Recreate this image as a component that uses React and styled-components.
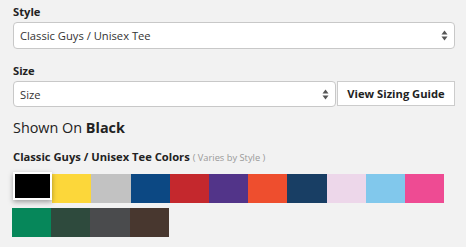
import React from "react";
import styled, { createGlobalStyle } from "styled-components";

const GlobalStyle = createGlobalStyle`
  html, body {
    margin: 0;
    padding: 0;
    background: #f2f2f2;
  }
  body {
    font-family: "Open Sans", "Liberation Sans", sans-serif;
    color: #222;
  }
`;

const colorsRowOne = [
  "#000000",
  "#fcd73a",
  "#c2c2c2",
  "#0c4883",
  "#c4282d",
  "#523489",
  "#ee4e2e",
  "#183e64",
  "#edd7ea",
  "#81c8ec",
  "#ee4b93",
];

const colorsRowTwo = ["#06875a", "#2e4a3d", "#4a4b4d", "#48372f"];

const Arrows = () => (
  <svg width="7" height="11" viewBox="0 0 7 11">
    <polygon points="3.5,0.5 6.5,4.5 0.5,4.5" fill="#555" />
    <polygon points="3.5,10.5 6.5,6.5 0.5,6.5" fill="#555" />
  </svg>
);

const App = () => {
  return (
    <Page>
      <GlobalStyle />
      <Field>
        <Label>Style</Label>
        <Select>
          <span>Classic Guys / Unisex Tee</span>
          <Arrows />
        </Select>
      </Field>
      <Field>
        <Label>Size</Label>
        <SizeRow>
          <Select short>
            <span>Size</span>
            <Arrows />
          </Select>
          <GuideButton>View Sizing Guide</GuideButton>
        </SizeRow>
      </Field>
      <ShownOn>
        Shown On <b>Black</b>
      </ShownOn>
      <ColorsLabel>
        Classic Guys / Unisex Tee Colors <small>( Varies by Style )</small>
      </ColorsLabel>
      <Swatches>
        {colorsRowOne.map((c, i) => (
          <Swatch key={c} color={c} selected={i === 0} />
        ))}
      </Swatches>
      <Swatches second>
        {colorsRowTwo.map((c) => (
          <Swatch key={c} color={c} />
        ))}
      </Swatches>
    </Page>
  );
};

const Page = styled.div`
  width: 442px;
  padding: 3px 0 0 13px;
`;

const Field = styled.div`
  display: flex;
  flex-direction: column;
  margin-bottom: 13px;
`;

const Label = styled.div`
  font-size: 11.2px;
  font-weight: 700;
  line-height: 17px;
  margin-bottom: 2px;
`;

const Select = styled.div`
  flex: 1 1 auto;
  box-sizing: border-box;
  height: ${(p) => (p.short ? "26px" : "27px")};
  display: flex;
  align-items: center;
  justify-content: space-between;
  padding: 0 6px 0 6px;
  background: #fff;
  border: 1px solid #c8c8c8;
  border-radius: 4px;
  font-size: 11.2px;
  color: #333;
`;

const SizeRow = styled.div`
  display: flex;
  align-items: flex-start;
  gap: 1px;
`;

const GuideButton = styled.div`
  box-sizing: border-box;
  width: 118px;
  height: 25px;
  display: flex;
  align-items: center;
  justify-content: center;
  background: #fff;
  border: 1px solid #ccc;
  font-size: 11.2px;
  font-weight: 700;
  color: #222;
`;

const ShownOn = styled.div`
  font-size: 14.4px;
  line-height: 20px;
  margin-top: -2px;
  color: #222;

  b {
    font-weight: 700;
  }
`;

const ColorsLabel = styled.div`
  font-size: 11.2px;
  font-weight: 700;
  line-height: 17px;
  margin-top: 10px;
  color: #222;

  small {
    font-size: 9.3px;
    font-weight: 400;
    color: #999;
  }
`;

const Swatches = styled.div`
  display: flex;
  margin-top: ${(p) => (p.second ? "5px" : "8px")};
  margin-left: ${(p) => (p.second ? "-1px" : "0")};
`;

const Swatch = styled.div`
  box-sizing: border-box;
  width: 39.2px;
  height: ${(p) => (p.selected ? "28px" : "29px")};
  background: ${(p) => p.color};
  border: ${(p) => (p.selected ? "2px solid #fff" : "none")};
  box-shadow: ${(p) => (p.selected ? "0 2px 5px rgba(0,0,0,0.35)" : "none")};
  transform: ${(p) => (p.selected ? "translateY(-2px)" : "none")};
  position: relative;
  z-index: ${(p) => (p.selected ? 1 : 0)};
`;

export default App;
